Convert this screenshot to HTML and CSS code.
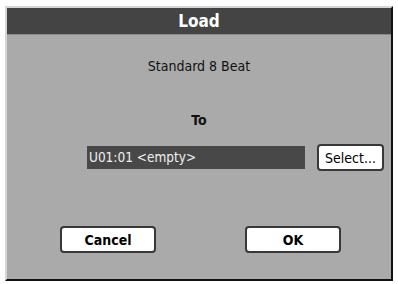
FILE: index.html
```html
<!DOCTYPE html>
<html>
<head>
<meta charset="utf-8">
<link rel="stylesheet" href="styles.css">
</head>
<body>
<div class="screen">
  <div class="dialog">
    <div class="title">Load</div>
    <div class="body">
      <div class="source">Standard 8 Beat</div>
      <div class="to">To</div>
      <div class="dest-row">
        <div class="field">U01:01 &lt;empty&gt;</div>
        <div class="btn select">Select...</div>
      </div>
      <div class="actions">
        <div class="btn action">Cancel</div>
        <div class="btn action">OK</div>
      </div>
    </div>
  </div>
</div>
</body>
</html>
```
FILE: styles.css
```css
html, body {
  margin: 0;
  padding: 0;
  background: #ffffff;
}
body {
  font-family: "DejaVu Sans Condensed", "DejaVu Sans", sans-serif;
  font-size: 14px;
  color: #111;
}
.screen {
  width: 398px;
  height: 284px;
  padding: 6px 0 0 5px;
  box-sizing: border-box;
}
.dialog {
  width: 388px;
  height: 275px;
  box-sizing: border-box;
  border-top: 2px solid #d6d6d6;
  border-left: 2px solid #d6d6d6;
  border-right: 2px solid #111;
  border-bottom: 2px solid #111;
  display: flex;
  flex-direction: column;
  background: #aaaaaa;
}
.title {
  height: 26px;
  background: #444444;
  color: #ffffff;
  font-weight: bold;
  font-size: 17px;
  display: flex;
  align-items: center;
  justify-content: center;
  border-bottom: 1px solid #8a8a8a;
}
.body {
  flex: 1;
  display: flex;
  flex-direction: column;
  align-items: center;
}
.source {
  margin-top: 23px;
  height: 16px;
  line-height: 16px;
}
.to {
  margin-top: 38px;
  height: 16px;
  line-height: 16px;
  font-weight: bold;
}
.dest-row {
  margin-top: 16px;
  display: flex;
  align-items: center;
  gap: 12px;
  align-self: flex-start;
  margin-left: 80px;
}
.field {
  width: 218px;
  height: 23px;
  background: #484848;
  color: #f0f0f0;
  font-size: 13.5px;
  line-height: 23px;
  padding-left: 2px;
  box-sizing: border-box;
}
.btn {
  background: #ffffff;
  border: 2px solid #383838;
  border-radius: 4px;
  box-sizing: border-box;
  display: flex;
  align-items: center;
  justify-content: center;
  color: #000;
}
.select {
  width: 67px;
  height: 27px;
}
.actions {
  margin-top: 55px;
  display: flex;
  gap: 89px;
  margin-left: 3px;
}
.action {
  width: 96px;
  height: 27px;
  font-weight: bold;
}
```
